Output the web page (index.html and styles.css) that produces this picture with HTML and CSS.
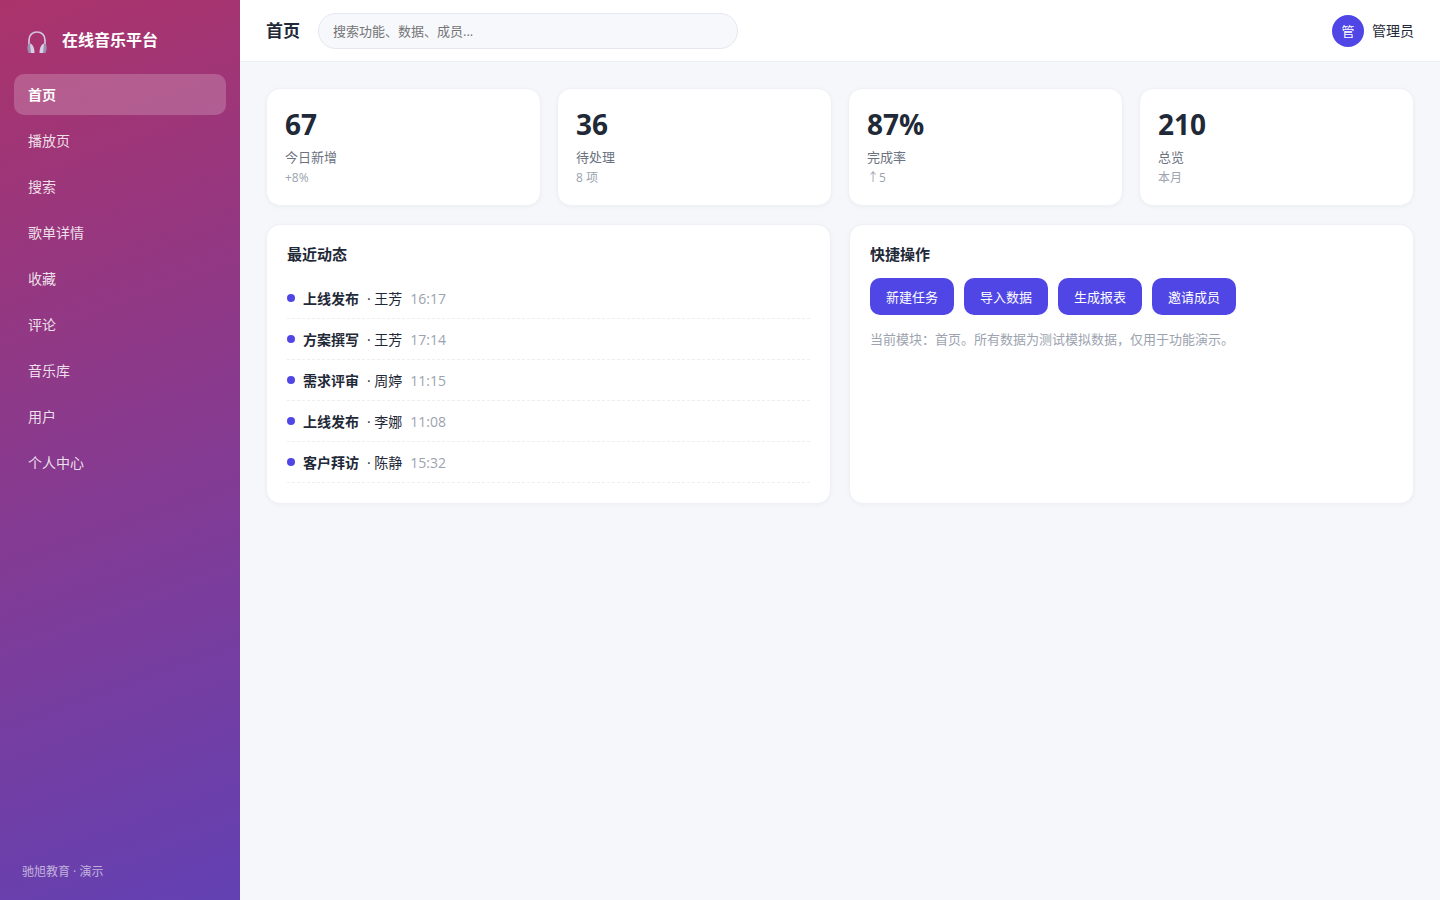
FILE: index.html
```html
<!DOCTYPE html>
<html lang="zh-CN">
<head>
    <meta charset="UTF-8">
    <meta name="viewport" content="width=device-width, initial-scale=1">
    <title>在线音乐平台 - 首页</title>
    <link rel="stylesheet" href="styles.css">
</head>
<body>
<div class="layout">
    <aside class="sidebar">
        <div class="brand">
            <svg class="brand-icon" viewBox="0 0 22 24" aria-hidden="true">
                <path d="M3 15V10C3 5 6.500 2 11 2s8 3 8 8v5" fill="none" stroke="#d3c3dc" stroke-width="1.7"/>
                <path d="M2 14.5 4 13.5 7.5 23H2.500C1.200 20 1 17 2 14.5z" fill="#9c8eb2"/>
                <path d="M4 13.5C6.500 14 8.500 17.500 8.500 23H5z" fill="#d9cfe2"/>
                <path d="M20 14.500 18 13.500 14.500 23H19.500c1.300-3 1.500-6 .5-8.500z" fill="#9c8eb2"/>
                <path d="M18 13.500C15.500 14 13.500 17.500 13.500 23H17z" fill="#d9cfe2"/>
            </svg>
            <span>在线音乐平台</span>
        </div>
        <nav class="nav">
            <a href="#" class="nav-item active">首页</a>
            <a href="#" class="nav-item">播放页</a>
            <a href="#" class="nav-item">搜索</a>
            <a href="#" class="nav-item">歌单详情</a>
            <a href="#" class="nav-item">收藏</a>
            <a href="#" class="nav-item">评论</a>
            <a href="#" class="nav-item">音乐库</a>
            <a href="#" class="nav-item">用户</a>
            <a href="#" class="nav-item">个人中心</a>
        </nav>
        <div class="sidebar-foot">驰旭教育 · 演示</div>
    </aside>
    <div class="main">
        <header class="topbar">
            <h1>首页</h1>
            <input class="search" type="search" aria-label="搜索" placeholder="搜索功能、数据、成员...">
            <div class="user">
                <span class="avatar">管</span>
                <span>管理员</span>
            </div>
        </header>
        <main class="content">
            <section class="stats">
                <div class="stat">
                    <div class="stat-num">67</div>
                    <div class="stat-label">今日新增</div>
                    <div class="stat-sub">+8%</div>
                </div>
                <div class="stat">
                    <div class="stat-num">36</div>
                    <div class="stat-label">待处理</div>
                    <div class="stat-sub">8 项</div>
                </div>
                <div class="stat">
                    <div class="stat-num">87%</div>
                    <div class="stat-label">完成率</div>
                    <div class="stat-sub">↑5</div>
                </div>
                <div class="stat">
                    <div class="stat-num">210</div>
                    <div class="stat-label">总览</div>
                    <div class="stat-sub">本月</div>
                </div>
            </section>
            <section class="panels">
                <div class="panel">
                    <h2>最近动态</h2>
                    <ul class="feed">
                        <li><i class="dot"></i><b>上线发布</b><span>· 王芳</span><time>16:17</time></li>
                        <li><i class="dot"></i><b>方案撰写</b><span>· 王芳</span><time>17:14</time></li>
                        <li><i class="dot"></i><b>需求评审</b><span>· 周婷</span><time>11:15</time></li>
                        <li><i class="dot"></i><b>上线发布</b><span>· 李娜</span><time>11:08</time></li>
                        <li><i class="dot"></i><b>客户拜访</b><span>· 陈静</span><time>15:32</time></li>
                    </ul>
                </div>
                <div class="panel">
                    <h2>快捷操作</h2>
                    <div class="actions">
                        <button type="button">新建任务</button>
                        <button type="button">导入数据</button>
                        <button type="button">生成报表</button>
                        <button type="button">邀请成员</button>
                    </div>
                    <p class="note">当前模块：首页。所有数据为测试模拟数据，仅用于功能演示。</p>
                </div>
            </section>
        </main>
    </div>
</div>
</body>
</html>
```
FILE: styles.css
```css
* {
    box-sizing: border-box;
    margin: 0;
    padding: 0;
}

body {
    font-family: 'Open Sans', 'Noto Sans CJK SC', sans-serif;
    font-size: 14px;
    line-height: 20px;
    color: #1f2937;
    background: #f5f7fb;
}

input,
button {
    font-family: inherit;
}

.layout {
    display: flex;
    min-height: 100vh;
}

/* 侧边栏 */
.sidebar {
    display: flex;
    flex-direction: column;
    flex: none;
    width: 240px;
    padding: 22px 14px 18px;
    color: #fff;
    background: linear-gradient(160deg, #ab336b, #6341b3);
}

.brand {
    display: flex;
    align-items: center;
    gap: 14px;
    height: 36px;
    padding: 0 12px;
    margin-bottom: 16px;
    font-size: 16px;
    font-weight: 700;
}

.brand-icon {
    width: 22px;
    height: 24px;
    margin-top: 4px;
}

.nav {
    display: flex;
    flex-direction: column;
    gap: 5px;
}

.nav-item {
    padding: 11px 14px 10px;
    border-radius: 10px;
    color: rgba(255, 255, 255, 0.85);
    text-decoration: none;
}

.nav-item.active {
    color: #fff;
    font-weight: 700;
    background: rgba(255, 255, 255, 0.2);
}

.sidebar-foot {
    margin-top: auto;
    padding: 0 8px;
    font-size: 12px;
    color: rgba(255, 255, 255, 0.6);
}

/* 顶栏 */
.main {
    flex: 1;
    min-width: 0;
}

.topbar {
    display: flex;
    align-items: center;
    gap: 18px;
    height: 62px;
    padding: 0 26px;
    background: #fff;
    border-bottom: 1px solid #eceef3;
}

.topbar h1 {
    font-size: 17px;
    font-weight: 700;
}

.search {
    width: 420px;
    height: 36px;
    padding: 0 14px;
    border: 1px solid #e5e7f0;
    border-radius: 18px;
    font-size: 13px;
    background: #f7f8fc;
    outline: none;
}

.search::placeholder {
    color: #757575;
}

.user {
    display: flex;
    align-items: center;
    gap: 8px;
    margin-left: auto;
}

.avatar {
    display: flex;
    align-items: center;
    justify-content: center;
    width: 32px;
    height: 32px;
    border-radius: 50%;
    font-size: 13px;
    color: #fff;
    background: #4f46e5;
}

/* 内容区 */
.content {
    padding: 26px;
}

.stats {
    display: grid;
    grid-template-columns: repeat(4, 1fr);
    gap: 16px;
    margin-bottom: 18px;
}

.stat,
.panel {
    background: #fff;
    border: 1px solid #eff1f6;
    border-radius: 14px;
    box-shadow: 0 1px 4px rgba(15, 23, 42, 0.04);
}

.stat {
    padding: 18px;
}

.stat-num {
    margin-bottom: 6px;
    font-size: 28px;
    font-weight: 700;
    line-height: 34px;
}

.stat-label {
    font-size: 13px;
    color: #6b7280;
}

.stat-sub {
    padding-top: 2px;
    font-size: 12px;
    color: #9ca3af;
    line-height: 18px;
}

.panels {
    display: grid;
    grid-template-columns: repeat(2, 1fr);
    gap: 18px;
}

.panel {
    padding: 20px;
}

.panel h2 {
    margin-bottom: 15px;
    font-size: 15px;
    font-weight: 700;
    line-height: 18px;
}

.feed {
    list-style: none;
}

.feed li {
    display: flex;
    align-items: center;
    gap: 8px;
    padding: 11px 0 9px;
    border-bottom: 1px dashed #eceef2;
}

.dot {
    width: 8px;
    height: 8px;
    margin-bottom: 2px;
    border-radius: 50%;
    background: #4f46e5;
}

.feed time {
    color: #9ca3af;
}

.actions {
    display: flex;
    flex-wrap: wrap;
    gap: 10px;
    margin-bottom: 14px;
}

.actions button {
    height: 37px;
    padding: 0 16px;
    border: none;
    border-radius: 10px;
    font-size: 13px;
    color: #fff;
    background: #4f46e5;
    cursor: pointer;
}

.note {
    font-size: 13px;
    color: #9ca3af;
}
```
